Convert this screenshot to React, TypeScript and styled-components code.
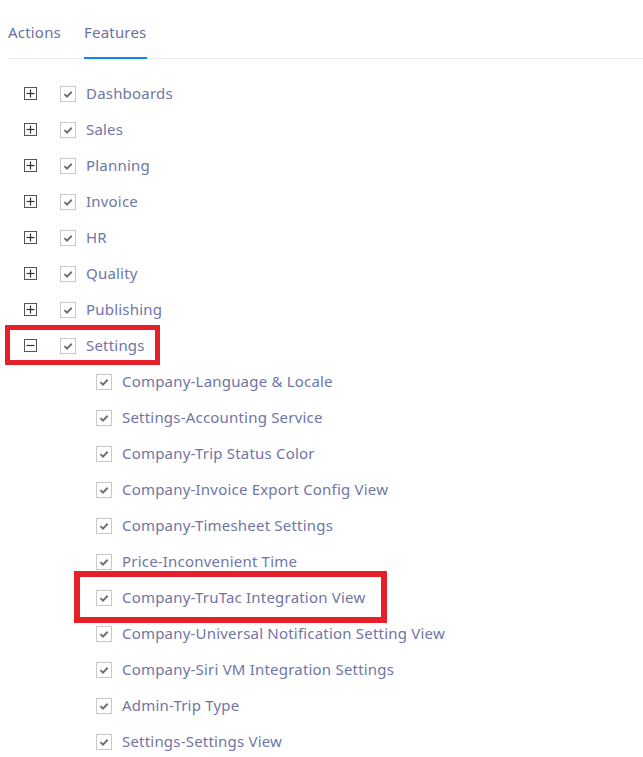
import styled, { createGlobalStyle } from "styled-components";

interface Feature {
    name: string;
    expanded?: boolean;
    highlight?: boolean;
    children?: { name: string; highlight?: boolean }[];
}

const features: Feature[] = [
    { name: "Dashboards" },
    { name: "Sales" },
    { name: "Planning" },
    { name: "Invoice" },
    { name: "HR" },
    { name: "Quality" },
    { name: "Publishing" },
    {
        name: "Settings",
        expanded: true,
        highlight: true,
        children: [
            { name: "Company-Language & Locale" },
            { name: "Settings-Accounting Service" },
            { name: "Company-Trip Status Color" },
            { name: "Company-Invoice Export Config View" },
            { name: "Company-Timesheet Settings" },
            { name: "Price-Inconvenient Time" },
            { name: "Company-TruTac Integration View", highlight: true },
            { name: "Company-Universal Notification Setting View" },
            { name: "Company-Siri VM Integration Settings" },
            { name: "Admin-Trip Type" },
            { name: "Settings-Settings View" },
        ],
    },
];

const Check = () => (
    <CheckBox>
        <svg width="12" height="12" viewBox="0 0 12 12">
            <path d="M2.4 6.1 L5 8.6 L9.7 3.7" fill="none" stroke="#6f6f6f" strokeWidth="2" />
        </svg>
    </CheckBox>
);

const App = () => {
    return (
        <Page>
            <GlobalStyle />
            <Tabs>
                <Tab>Actions</Tab>
                <Tab $active>Features</Tab>
            </Tabs>

            <Tree>
                {features.map((feature) => (
                    <li key={feature.name}>
                        <Row>
                            {feature.highlight && <Highlight $variant="parent" />}
                            <Expander>
                                <svg width="9" height="9" viewBox="0 0 9 9">
                                    <path d="M0.5 4.5 H8.5" stroke="#333" strokeWidth="1.2" />
                                    {!feature.expanded && (
                                        <path d="M4.5 0.5 V8.5" stroke="#333" strokeWidth="1.2" />
                                    )}
                                </svg>
                            </Expander>
                            <Check />
                            <Label>{feature.name}</Label>
                        </Row>
                        {feature.expanded && feature.children && (
                            <SubTree>
                                {feature.children.map((child) => (
                                    <Row key={child.name}>
                                        {child.highlight && <Highlight $variant="child" />}
                                        <Check />
                                        <Label>{child.name}</Label>
                                    </Row>
                                ))}
                            </SubTree>
                        )}
                    </li>
                ))}
            </Tree>
        </Page>
    );
};

const GlobalStyle = createGlobalStyle`
    body {
        margin: 0;
        background: #fff;
        font-family: "Noto Sans", "Open Sans", sans-serif;
    }
`;

const Page = styled.div`
    width: 643px;
    height: 757px;
    padding-left: 8px;
    box-sizing: border-box;
    overflow: hidden;
`;

const Tabs = styled.div`
    display: flex;
    gap: 23px;
    height: 59px;
    border-bottom: 1px solid #ebebeb;
    box-sizing: border-box;
`;

const Tab = styled.div<{ $active?: boolean }>`
    display: flex;
    align-items: center;
    font-size: 15px;
    letter-spacing: 0.2px;
    color: #6c71a1;
    padding-top: 7px;
    box-sizing: border-box;
    border-bottom: 2px solid ${({ $active }) => ($active ? "#0a84ff" : "transparent")};
    margin-bottom: -1px;
`;

const Tree = styled.ul`
    list-style: none;
    margin: 16px 0 0;
    padding: 0 0 0 16px;
`;

const SubTree = styled.div`
    padding-left: 72px;
`;

const Row = styled.div`
    position: relative;
    display: flex;
    align-items: center;
    height: 36px;
`;

const Highlight = styled.div<{ $variant: "parent" | "child" }>`
    position: absolute;
    border: ${({ $variant }) => ($variant === "parent" ? "5px" : "6px")} solid #e5202a;
    ${({ $variant }) =>
        $variant === "parent"
            ? "left: -19px; top: -2px; width: 145px; height: 30px;"
            : "left: -22px; top: -8px; width: 301px; height: 40px;"}
`;

const Expander = styled.span`
    width: 13px;
    height: 13px;
    border: 1px solid #555;
    box-sizing: border-box;
    display: flex;
    align-items: center;
    justify-content: center;
    margin-right: 23px;
    margin-top: 1px;
`;

const CheckBox = styled.span`
    width: 16px;
    height: 16px;
    border: 1px solid #c9c9c9;
    box-sizing: border-box;
    display: flex;
    align-items: center;
    justify-content: center;
    margin-right: 10px;
    margin-top: 1px;
    background: #fff;
`;

const Label = styled.span`
    font-size: 15px;
    letter-spacing: 0.2px;
    color: #7075a6;
    white-space: nowrap;
`;

export default App;
